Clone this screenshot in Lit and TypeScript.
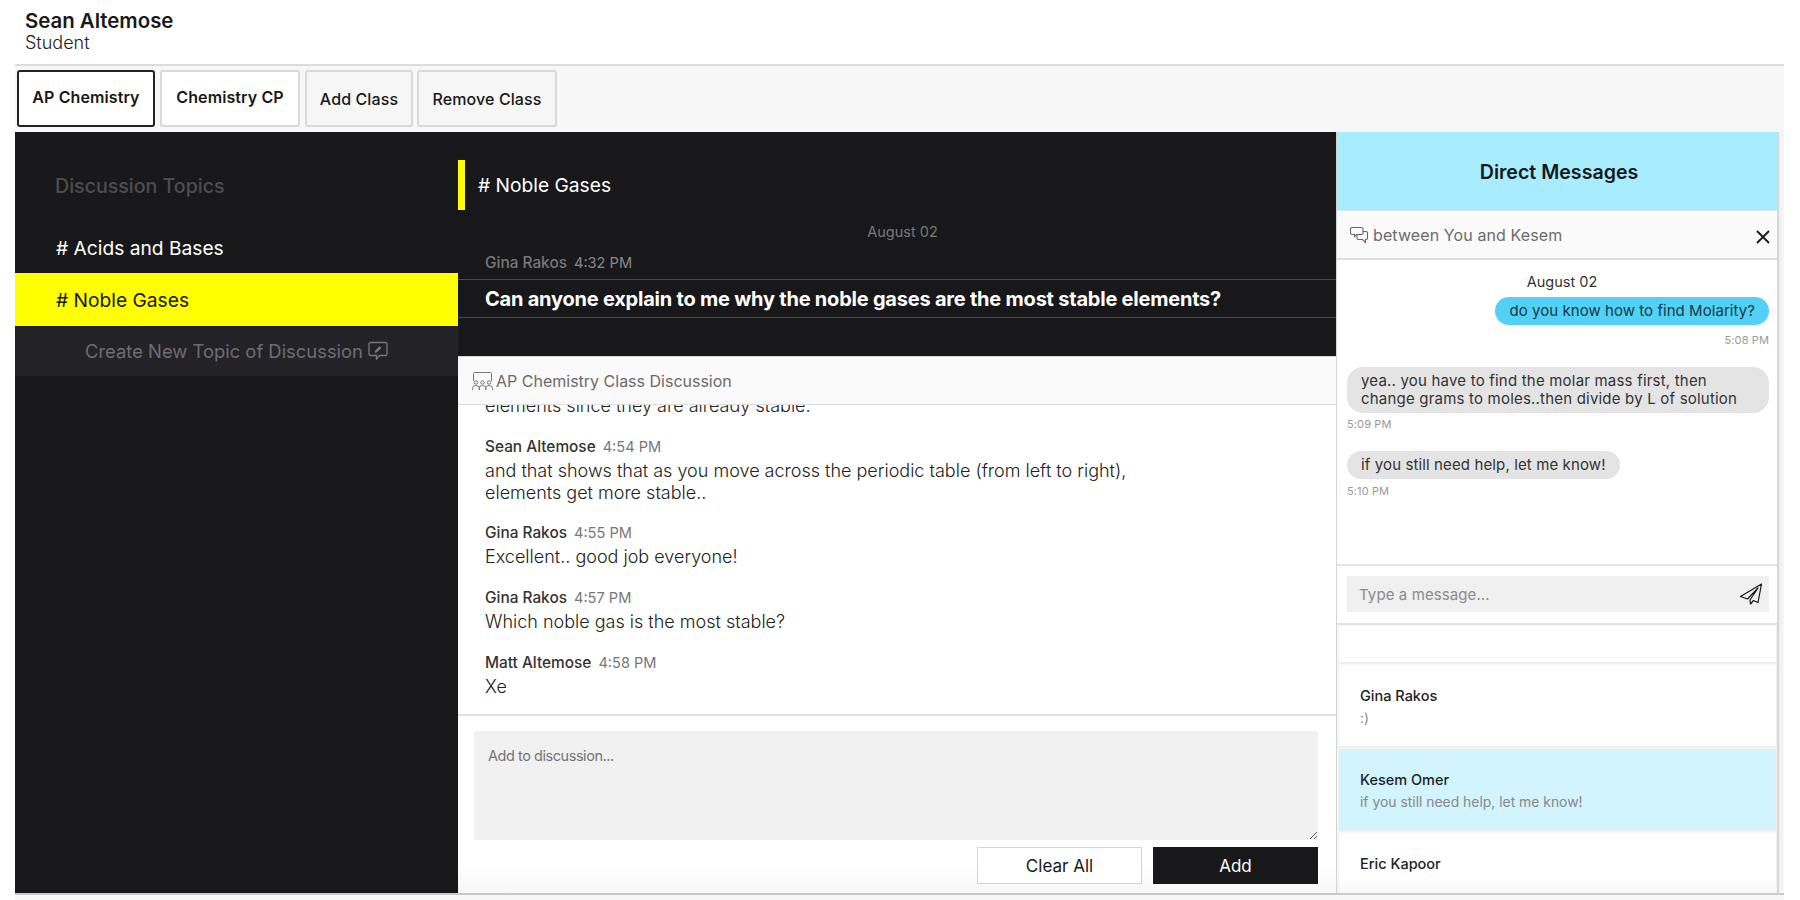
import { LitElement, html, css } from 'lit';
import { customElement } from 'lit/decorators.js';

const posts = [
  { who: 'Sean Altemose', at: '4:54 PM', lines: ['and that shows that as you move across the periodic table (from left to right),', 'elements get more stable..'] },
  { who: 'Gina Rakos', at: '4:55 PM', lines: ['Excellent.. good job everyone!'] },
  { who: 'Gina Rakos', at: '4:57 PM', lines: ['Which noble gas is the most stable?'] },
  { who: 'Matt Altemose', at: '4:58 PM', lines: ['Xe'] },
];

const contacts = [
  { name: 'Gina Rakos', last: ':)', on: false },
  { name: 'Kesem Omer', last: 'if you still need help, let me know!', on: true },
  { name: 'Eric Kapoor', last: '', on: false },
];

@customElement('app-root')
export class AppRoot extends LitElement {
  static styles = css`
    :host {
      display: block;
      width: 1800px;
      height: 900px;
      overflow: hidden;
      background: #fff;
      font-family: Inter, 'Noto Sans', sans-serif;
      color: #18181a;
    }
    .who {
      height: 64px;
      box-sizing: border-box;
      padding: 9px 0 0 25px;
    }
    .who b {
      display: block;
      font-size: 20.4px;
      font-weight: 600;
      line-height: 24px;
    }
    .who span {
      display: block;
      font-size: 18px;
      font-weight: 300;
      line-height: 20px;
      color: #222;
    }
    .page {
      margin-left: 15px;
      width: 1769px;
      height: 836px;
      background: #f7f7f7;
    }
    .tabs {
      height: 68px;
      box-sizing: border-box;
      border-top: 2px solid #dcdcdc;
      padding: 4px 0 0 2px;
      display: flex;
      gap: 5px;
    }
    .tab {
      height: 57px;
      box-sizing: border-box;
      border: 2px solid #d9d9d9;
      border-radius: 3px;
      background: #fff;
      display: flex;
      align-items: center;
      justify-content: center;
      font-size: 16px;
      font-weight: 600;
      letter-spacing: 0.1px;
      padding-bottom: 3px;
    }
    .tab.sel { border-color: #222; width: 138px; }
    .tab.cls { width: 140px; }
    .tab.act {
      background: #f6f6f6;
      font-weight: 500;
      padding-bottom: 0;
      margin-right: -1px;
    }
    .main {
      height: 761px;
      display: flex;
      box-shadow: 0 2px 0 #c9c9c9;
    }
    .topics {
      width: 443px;
      background: #18181a;
    }
    .topics h3 {
      margin: 0;
      height: 104px;
      box-sizing: border-box;
      padding: 42px 0 0 40px;
      font-size: 19.6px;
      line-height: 24px;
      font-weight: 500;
      color: #4d4d50;
    }
    .topic {
      height: 37px;
      padding: 0 0 0 41px;
      font-size: 19.2px;
      line-height: 24px;
      color: #fff;
    }
    .topic.sel {
      height: 53px;
      line-height: 54px;
      background: #ffff00;
      color: #18181a;
    }
    .new {
      height: 50px;
      background: #232227;
      color: #6d6d72;
      font-size: 18.4px;
      display: flex;
      align-items: center;
      justify-content: center;
      gap: 4px;
      padding-left: 1px;
      box-sizing: border-box;
    }
    .center {
      width: 878px;
      display: flex;
      flex-direction: column;
      background: #fff;
    }
    .thread {
      height: 224px;
      background: #18181a;
      color: #fff;
    }
    .thread-title {
      margin-top: 28px;
      height: 50px;
      box-sizing: border-box;
      border-left: 7px solid #ffff00;
      padding-left: 13px;
      font-size: 19.2px;
      line-height: 50px;
    }
    .thread .day {
      margin-top: 12px;
      padding-left: 11px;
      text-align: center;
      font-size: 14.5px;
      line-height: 20px;
      color: #77777a;
    }
    .thread .meta {
      margin-top: 10px;
      padding-left: 27px;
      line-height: 20px;
      color: #77777a;
    }
    .question {
      margin-top: 6px;
      height: 39px;
      box-sizing: border-box;
      border-top: 1.5px solid #1f5a66;
      border-bottom: 1.5px solid #1f5a66;
      padding-left: 27px;
      font-size: 20px;
      font-weight: 700;
      line-height: 39px;
      letter-spacing: -0.22px;
    }
    .meta b { font-size: 15.4px; font-weight: 500; }
    .meta span { font-size: 14.6px; margin-left: 7px; color: #888; }
    .band {
      box-sizing: border-box;
      background: #fafafa;
      border-bottom: 1px solid #dedede;
      display: flex;
      align-items: center;
      font-size: 16px;
      color: #6b6b6b;
      flex: none;
    }
    .center .band {
      height: 49px;
      padding-left: 13px;
      gap: 2px;
      border-top: 1px solid #d8d8d8;
    }
    .posts {
      height: 311px;
      flex: none;
      overflow: hidden;
      display: flex;
      flex-direction: column;
      justify-content: flex-end;
      padding: 0 27px 16px;
      box-sizing: border-box;
      border-bottom: 2px solid #e2e2e2;
      font-size: 18px;
      font-weight: 300;
      line-height: 22px;
      color: #222;
    }
    .posts p { margin: 0; }
    .post { margin-top: 18.8px; }
    .posts .meta { line-height: 20px; margin-bottom: 3px; color: #333; }
    .posts .meta span { color: #777; font-weight: 400; }
    .compose {
      flex: 1;
      padding: 15px 18px 0 16px;
      background: linear-gradient(#fff 85%, #f7f7f7);
    }
    textarea {
      display: block;
      width: 100%;
      height: 109px;
      box-sizing: border-box;
      border: 0;
      outline: 0;
      padding: 15px 14px;
      background: #f1f1f1;
      font: 14.5px/20px Inter, sans-serif;
      letter-spacing: -0.45px;
      border-radius: 0;
    }
    textarea::placeholder { color: #757575; opacity: 1; }
    .acts {
      margin-top: 7px;
      display: flex;
      justify-content: flex-end;
      gap: 11px;
    }
    .acts button {
      width: 165px;
      height: 37px;
      box-sizing: border-box;
      font: 17px Inter, sans-serif;
      border: 1px solid #d4d4d4;
      background: #fff;
      color: #18181a;
    }
    .acts button.dark {
      background: #18181a;
      border-color: #18181a;
      color: #fff;
    }
    .side {
      width: 443px;
      box-sizing: border-box;
      background: #fff;
      border-left: 1px solid #d4d4d4;
      border-right: 2px solid #d8d8d8;
      display: flex;
      flex-direction: column;
      box-shadow: 3px 0 3px -1px #eee;
    }
    .side h2 {
      margin: 0;
      height: 79px;
      flex: none;
      background: #a7edff;
      border-bottom: 1px solid #d6e6ea;
      box-sizing: border-box;
      text-align: center;
      font-size: 19.6px;
      font-weight: 600;
      line-height: 80px;
      padding-left: 4px;
    }
    .side .band {
      height: 49px;
      padding: 0 6px 0 12px;
      gap: 4px;
      border-bottom-width: 2px;
      letter-spacing: 0.1px;
    }
    .close {
      margin-left: auto;
      display: flex;
      margin-top: 5px;
    }
    .chat {
      height: 306px;
      flex: none;
      box-sizing: border-box;
      border-bottom: 2px solid #e4e4e4;
      padding: 12px 8px 0 10px;
      font-size: 15px;
      letter-spacing: 0.12px;
      line-height: 18px;
    }
    .chat .day {
      text-align: center;
      font-size: 14.5px;
      line-height: 20px;
      padding-left: 8px;
      letter-spacing: 0;
      color: #333;
    }
    .bubble {
      display: block;
      width: fit-content;
      box-sizing: border-box;
      padding: 5px 14px;
      border-radius: 15px;
      background: #e4e4e4;
      color: #333;
    }
    .bubble.mine {
      margin: 5px 0 0 auto;
      background: #52d0f5;
      color: #143a46;
      letter-spacing: 0.05px;
    }
    .bubble.wide { width: 100%; border-radius: 16px; letter-spacing: 0.2px; }
    .at {
      font-size: 11px;
      line-height: 14px;
      color: #999;
      margin: 4px 0 20px;
    }
    .at.right { text-align: right; margin-bottom: 20px; margin-top: 8px; }
    .at.last { margin-top: 5px; }
    .send {
      height: 59px;
      flex: none;
      box-sizing: border-box;
      border-bottom: 2px solid #e4e4e4;
      padding: 10px 8px 0 10px;
    }
    .send div {
      height: 36px;
      background: #f0f0f0;
      display: flex;
      align-items: center;
      justify-content: space-between;
      padding: 0 6px 0 12px;
      font-size: 15px;
      letter-spacing: 0.1px;
      color: #8a8a8a;
    }
    .people {
      flex: 1;
      overflow: hidden;
      padding: 1px 1px 0 2px;
      display: flex;
      flex-direction: column;
      gap: 3px;
      background: #f7f7f7;
    }
    .card {
      flex: none;
      height: 81px;
      box-sizing: border-box;
      background: #fff;
      padding: 20px 0 0 21px;
      font-size: 14.5px;
      line-height: 22px;
      box-shadow: 0 1px 2px #e6e6e6;
    }
    .card.blank { height: 36px; }
    .card.on { background: #d2f4ff; }
    .card:last-child { background: linear-gradient(#fff 55%, #f7f7f7 75%); }
    .card b { display: block; font-weight: 500; color: #222; }
    .card span { display: block; font-size: 13.9px; color: #888; }
  `;

  render() {
    return html`
      <div class="who"><b>Sean Altemose</b><span>Student</span></div>
      <div class="page">
        <div class="tabs">
          <div class="tab sel">AP Chemistry</div>
          <div class="tab cls">Chemistry CP</div>
          <div class="tab act" style="width:108px">Add Class</div>
          <div class="tab act" style="width:140px">Remove Class</div>
        </div>
        <div class="main">
          <div class="topics">
            <h3>Discussion Topics</h3>
            <div class="topic"># Acids and Bases</div>
            <div class="topic sel"># Noble Gases</div>
            <div class="new">
              Create New Topic of Discussion
              <svg width="22" height="22" viewBox="0 0 22 22" fill="none" stroke="#77777c" stroke-width="1.3">
                <path d="M3.5 2.5h15a1.5 1.5 0 0 1 1.5 1.5v10a1.5 1.5 0 0 1-1.5 1.5h-6l-3 3.5v-3.5h-6A1.5 1.5 0 0 1 2 14V4a1.5 1.5 0 0 1 1.5-1.500z" />
                <path d="M8 12.500l.5-2 4-4 1.500 1.500-4 4z" fill="#77777c" stroke-width=".6" />
              </svg>
            </div>
          </div>
          <div class="center">
            <div class="thread">
              <div class="thread-title"># Noble Gases</div>
              <div class="day">August 02</div>
              <div class="meta"><b>Gina Rakos</b><span>4:32 PM</span></div>
              <div class="question">Can anyone explain to me why the noble gases are the most stable elements?</div>
            </div>
            <div class="band">
              <svg width="23" height="22" viewBox="0 0 23 22" fill="none" stroke="#777" stroke-width="1">
                <path d="M2.500 11V3.500a1 1 0 0 1 1-1h16a1 1 0 0 1 1 1V11" />
                <circle cx="5" cy="12.500" r="1.700" /><circle cx="11.500" cy="12.500" r="1.700" /><circle cx="18" cy="12.500" r="1.700" />
                <path d="M1.500 20v-1.500a3.500 3 0 0 1 7 0V20M8 20v-1.500a3.500 3 0 0 1 7 0V20M14.500 20v-1.500a3.500 3 0 0 1 7 0V20" />
              </svg>
              AP Chemistry Class Discussion
            </div>
            <div class="posts">
              <p>elements since they are already stable.</p>
              ${posts.map(
                (p) => html`
                  <div class="post">
                    <div class="meta"><b>${p.who}</b><span>${p.at}</span></div>
                    ${p.lines.map((l) => html`<p>${l}</p>`)}
                  </div>
                `,
              )}
            </div>
            <div class="compose">
              <textarea placeholder="Add to discussion..."></textarea>
              <div class="acts">
                <button>Clear All</button>
                <button class="dark">Add</button>
              </div>
            </div>
          </div>
          <div class="side">
            <h2>Direct Messages</h2>
            <div class="band">
              <svg width="20" height="20" viewBox="0 0 20 20" fill="none" stroke="#666" stroke-width="1.100">
                <path d="M3 2.500h9.500a1.500 1.500 0 0 1 1.500 1.500v4a1.500 1.500 0 0 1-1.500 1.500H7.500l-2 2v-2H3A1.500 1.500 0 0 1 1.500 8V4A1.500 1.500 0 0 1 3 2.500z" />
                <path d="M14 6.500h3a1.500 1.500 0 0 1 1.500 1.500v5a1.500 1.500 0 0 1-1.500 1.500h-.5v3l-3-3H9.500A1.500 1.500 0 0 1 8 13v-3.500" />
              </svg>
              between You and Kesem
              <span class="close">
                <svg width="16" height="16" viewBox="0 0 16 16" stroke="#18181a" stroke-width="1.800">
                  <path d="M2 2l12 12M14 2L2 14" />
                </svg>
              </span>
            </div>
            <div class="chat">
              <div class="day">August 02</div>
              <span class="bubble mine">do you know how to find Molarity?</span>
              <div class="at right">5:08 PM</div>
              <span class="bubble wide">yea.. you have to find the molar mass first, then<br />change grams to moles..then divide by L of solution</span>
              <div class="at">5:09 PM</div>
              <span class="bubble">if you still need help, let me know!</span>
              <div class="at last">5:10 PM</div>
            </div>
            <div class="send">
              <div>
                Type a message...
                <svg width="24" height="24" viewBox="0 0 24 24" fill="none" stroke="#18181a" stroke-width="1.200" stroke-linejoin="round">
                  <path d="M22.500 2L1.500 14.500l7 2.500 10.500-11-8 12 .5 4 3-3.500 4.500 2z" />
                </svg>
              </div>
            </div>
            <div class="people">
              <div class="card blank"></div>
              ${contacts.map(
                (c) => html`
                  <div class="card ${c.on ? 'on' : ''}">
                    <b>${c.name}</b>
                    <span>${c.last}</span>
                  </div>
                `,
              )}
            </div>
          </div>
        </div>
      </div>
    `;
  }
}
